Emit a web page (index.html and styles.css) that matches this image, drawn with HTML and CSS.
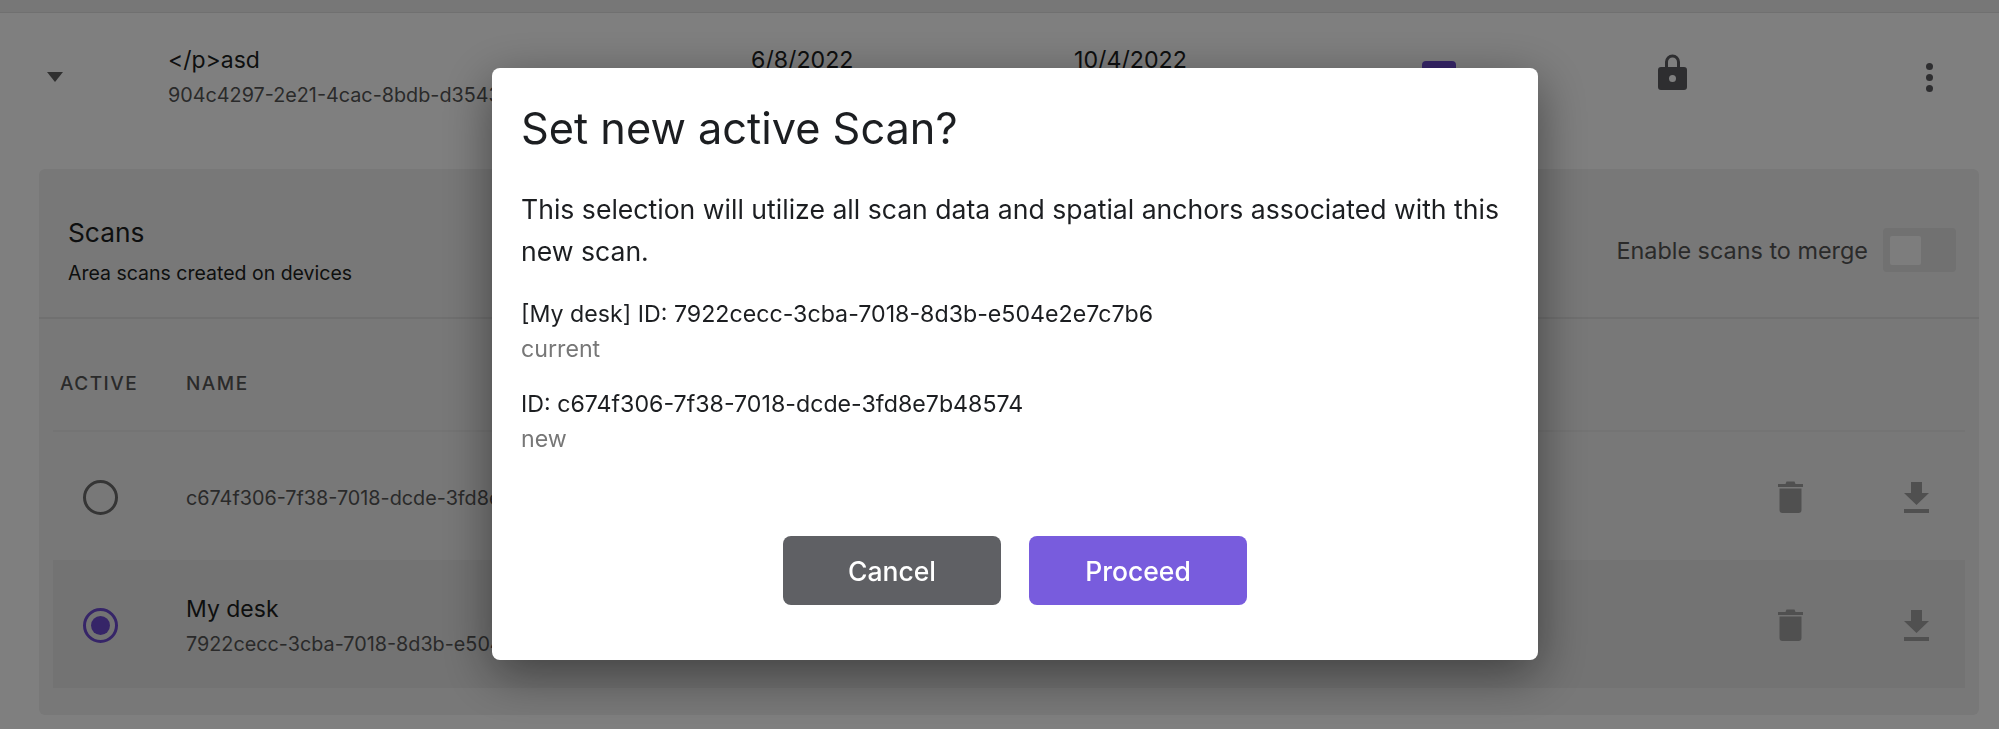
FILE: index.html
```html
<!DOCTYPE html>
<html lang="en">
<head>
<meta charset="utf-8">
<title>Set new active Scan?</title>
<link rel="stylesheet" href="styles.css">
</head>
<body>
<div class="page">
  <div class="topstrip"></div>
  <section class="room">
    <svg class="caret" viewBox="0 0 16 10"><path d="M0 0h16L8 10z"/></svg>
    <div class="room-name">
      <div class="room-title">&lt;/p&gt;asd</div>
      <div class="room-id">904c4297-2e21-4cac-8bdb-d3543</div>
    </div>
    <div class="room-date">6/8/2022</div>
    <div class="room-date">10/4/2022</div>
    <div class="room-check"></div>
    <svg class="lock" viewBox="0 0 29 37"><path fill-rule="evenodd" d="M7 14V9a7.500 7.500 0 0 1 15 0v5h4a3 3 0 0 1 3 3v17a3 3 0 0 1-3 3H3a3 3 0 0 1-3-3V17a3 3 0 0 1 3-3zm3 0h9V9a4.500 4.500 0 0 0-9 0zm4.500 8a3.500 3.500 0 1 0 0 7 3.500 3.500 0 0 0 0-7z"/></svg>
    <div class="kebab"><i></i><i></i><i></i></div>
  </section>
  <section class="panel">
    <header class="panel-head">
      <div>
        <div class="panel-title">Scans</div>
        <div class="panel-sub">Area scans created on devices</div>
      </div>
      <div class="merge">
        <span>Enable scans to merge</span>
        <div class="toggle"><div class="knob"></div></div>
      </div>
    </header>
    <div class="table">
      <div class="thead"><span class="col-active">ACTIVE</span><span>NAME</span></div>
      <div class="trow">
        <div class="col-active"><div class="radio"></div></div>
        <div class="scan-id solo">c674f306-7f38-7018-dcde-3fd8e7b48574</div>
        <svg class="trash" viewBox="0 0 25 32"><path d="M0 3h7.500l1-2.500h8l1 2.500H25v3H0zM1.500 7.500h22V29a3 3 0 0 1-3 3h-16a3 3 0 0 1-3-3z"/></svg>
        <svg class="dl" viewBox="0 0 25 31"><path d="M7 0h11v11h7L12.500 23 0 11h7zM0 27h25v4H0z"/></svg>
      </div>
      <div class="trow selected">
        <div class="col-active"><div class="radio on"><div class="dot"></div></div></div>
        <div>
          <div class="scan-name">My desk</div>
          <div class="scan-id">7922cecc-3cba-7018-8d3b-e504e2e7c7b6</div>
        </div>
        <svg class="trash" viewBox="0 0 25 32"><path d="M0 3h7.500l1-2.500h8l1 2.500H25v3H0zM1.500 7.500h22V29a3 3 0 0 1-3 3h-16a3 3 0 0 1-3-3z"/></svg>
        <svg class="dl" viewBox="0 0 25 31"><path d="M7 0h11v11h7L12.500 23 0 11h7zM0 27h25v4H0z"/></svg>
      </div>
    </div>
  </section>
</div>
<div class="overlay">
  <div class="modal">
    <h1>Set new active Scan?</h1>
    <p class="lead">This selection will utilize all scan data and spatial anchors associated with this new scan.</p>
    <div class="entry">
      <div class="entry-id">[My desk] ID: 7922cecc-3cba-7018-8d3b-e504e2e7c7b6</div>
      <div class="entry-tag">current</div>
    </div>
    <div class="entry">
      <div class="entry-id">ID: c674f306-7f38-7018-dcde-3fd8e7b48574</div>
      <div class="entry-tag">new</div>
    </div>
    <div class="actions">
      <button class="btn cancel">Cancel</button>
      <button class="btn proceed">Proceed</button>
    </div>
  </div>
</div>
</body>
</html>
```
FILE: styles.css
```css
* { box-sizing: border-box; }
html, body { margin: 0; height: 730px; overflow: hidden; background: #fff; }
body { font-family: Inter, "Noto Sans", sans-serif; color: #1c1e21; }
.page { height: 729px; background: #fff; overflow: hidden; }
.topstrip { height: 13px; background: #efefef; border-bottom: 1px solid #e0e0e0; }

.room { display: grid; grid-template-columns: 168px 583px 323px 348px 236px 268px 1fr; height: 156px; align-items: start; }
.caret { width: 16px; height: 10px; margin: 59px 0 0 47px; fill: #606060; }
.room-name { padding-top: 32px; min-width: 0; }
.room-title { font-size: 23px; line-height: 30px; }
.room-id { font-size: 19.800px; line-height: 26px; margin-top: 7px; color: #555; white-space: nowrap; }
.room-date { font-size: 23.200px; line-height: 30px; padding-top: 32px; }
.room-check { width: 34px; height: 34px; margin-top: 48px; background: #6d4bd1; border-radius: 4px; }
.lock { width: 29px; height: 37px; margin-top: 40px; fill: #5c5c60; }
.kebab { display: flex; flex-direction: column; gap: 4px; width: 7px; margin-top: 50px; }
.kebab i { width: 7px; height: 7px; border-radius: 50%; background: #5c5c60; }

.panel { margin: 0 20px 0 39px; height: 546px; background: #f0f0f0; border-radius: 6px; }
.panel-head { height: 150px; border-bottom: 2px solid #e0e0e0; display: flex; justify-content: space-between; padding: 47px 23px 0 29px; }
.panel-title { font-size: 26.300px; line-height: 34px; }
.panel-sub { font-size: 19.500px; line-height: 26px; margin-top: 10px; }
.merge { display: flex; align-items: center; gap: 15px; height: 44px; margin-top: 12px; color: #555; font-size: 23.400px; }
.toggle { width: 73px; height: 44px; background: #e2e2e2; border-radius: 4px; padding: 8px 7px; }
.knob { width: 31px; height: 29px; background: #fafafa; border-radius: 2px; }

.table { margin: 0 14px; }
.thead { height: 113px; border-bottom: 2px solid #e8e8e8; display: grid; grid-template-columns: 133px 1fr; align-items: center; padding-top: 17px; font-size: 19px; font-weight: 500; letter-spacing: 1.500px; color: #555; }
.thead .col-active { padding-left: 7px; }
.trow { height: 128px; display: grid; grid-template-columns: 133px 1fr 126px 25px; align-items: center; padding: 2px 36px 0 0; }
.selected { background: #e6e6e6; }
.col-active { display: flex; }
.radio { width: 35px; height: 35px; margin-left: 30px; border: 3px solid #6a6a6a; border-radius: 50%; }
.radio.on { border-color: #6d4bd1; display: flex; align-items: center; justify-content: center; }
.dot { width: 19px; height: 19px; border-radius: 50%; background: #6d4bd1; }
.scan-id { font-size: 19.800px; line-height: 26px; color: #555; white-space: nowrap; }
.solo { padding-top: 2px; }
.scan-name { font-size: 23px; line-height: 30px; margin-bottom: 7px; }
.trash { width: 25px; height: 32px; fill: #a0a0a0; }
.dl { width: 25px; height: 31px; fill: #a0a0a0; }

.overlay { position: fixed; left: 0; top: 0; width: 100%; height: 729px; background: rgba(0, 0, 0, 0.5); display: flex; align-items: center; justify-content: center; padding-left: 31px; padding-bottom: 1px; }
.modal { width: 1046px; height: 592px; background: #fff; border-radius: 8px; padding: 32px 29px 0; box-shadow: 0 14px 50px rgba(0, 0, 0, 0.45); color: #1c1e21; }
h1 { margin: 0; font-size: 43.300px; font-weight: 400; line-height: 56px; }
.lead { margin: 32px 0 0; font-size: 26.600px; line-height: 42px; }
.entry { margin-top: 25px; }
.lead + .entry { margin-top: 27px; }
.entry-id { font-size: 23.200px; line-height: 30px; }
.entry-tag { font-size: 23.200px; line-height: 30px; margin-top: 5px; color: #777; }
.actions { display: flex; justify-content: center; gap: 28px; margin-top: 82px; }
.btn { width: 218px; height: 69px; border: 0; border-radius: 8px; color: #fff; font: 500 26.500px Inter, "Noto Sans", sans-serif; }
.cancel { background: #5f6064; }
.proceed { background: #785cdd; }
```
